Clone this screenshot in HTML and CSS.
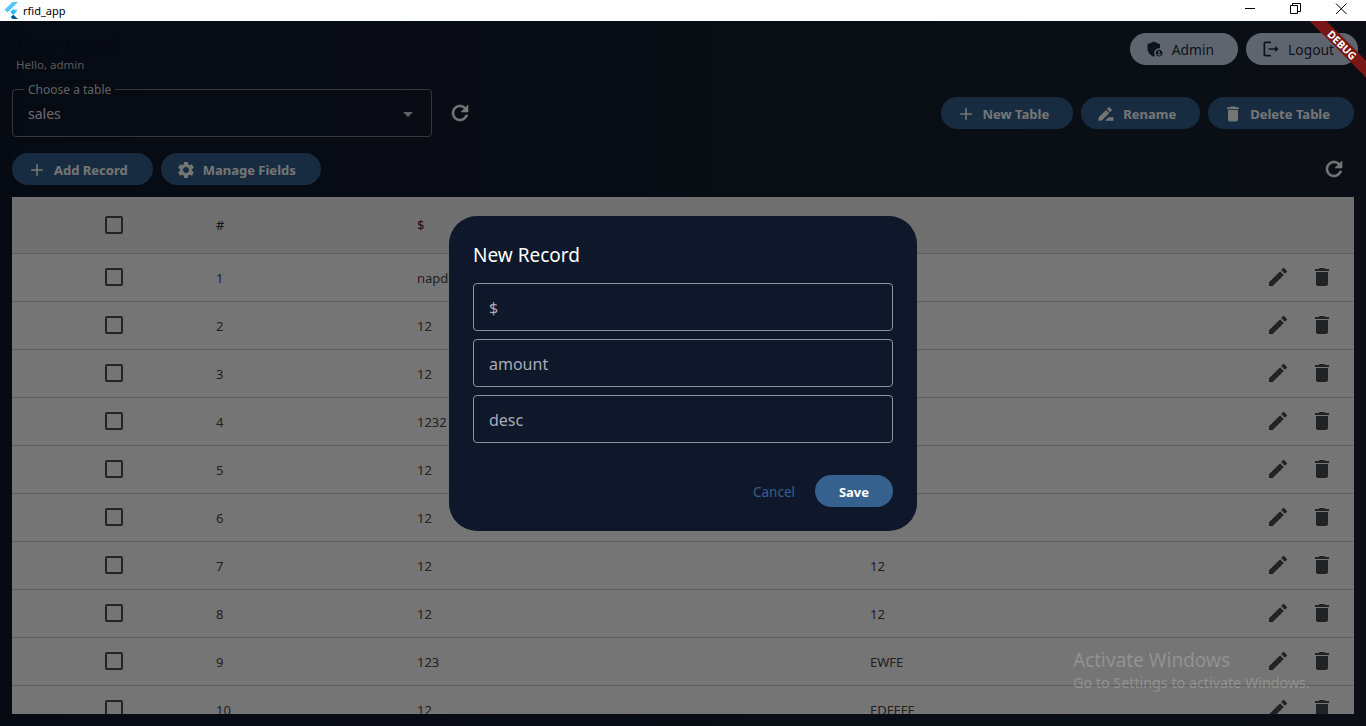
FILE: index.html
```html
<!DOCTYPE html>
<html lang="en">
<head>
    <meta charset="UTF-8">
    <meta name="viewport" content="width=device-width, initial-scale=1.0">
    <title>rfid_app</title>
    <link rel="stylesheet" href="styles.css">
</head>
<body>
    <div class="titlebar">
        <svg class="app-logo" width="16" height="17" viewBox="0 0 16 17">
            <polygon points="9.5,0 15,0 4.5,10.5 1.6,7.8" fill="#54c5f8"/>
            <polygon points="9.6,7.8 15,7.8 10.3,12.7 7.6,10" fill="#54c5f8"/>
            <polygon points="7.6,10 10.3,7.3 12.9,10 10.3,12.7" fill="#29b6f6"/>
            <polygon points="7.6,15 10.3,12.7 15,17 9.7,17" fill="#01579b"/>
        </svg>
        <span class="app-name">rfid_app</span>
        <div class="window-controls">
            <svg width="12" height="12" viewBox="0 0 12 12"><path d="M0 5.5h10" stroke="#000" fill="none"/></svg>
            <svg width="12" height="12" viewBox="0 0 12 12"><path d="M.5 2.5h7v8h-7zM2.5 2.5v-2h8v8h-3" stroke="#000" fill="none"/></svg>
            <svg width="12" height="12" viewBox="0 0 12 12"><path d="M1 .5l10.5 10.5M11.5 .5L1 11" stroke="#000" fill="none"/></svg>
        </div>
    </div>

    <div class="app">
        <div class="top-row">
            <div class="greeting">
                <div class="page-title">Dashboard</div>
                <div class="hello">Hello, admin</div>
            </div>
            <div class="user-actions">
                <button class="pill light">
                    <svg class="icon-sm" viewBox="0 0 24 24"><path d="M17 11c.34 0 .67.04 1 .09V6.27L10.5 3 3 6.27v4.91c0 4.54 3.2 8.79 7.5 9.82.55-.13 1.08-.32 1.6-.55-.69-.98-1.1-2.17-1.1-3.45 0-3.31 2.69-6 6-6z"/><path d="M17 13c-2.21 0-4 1.79-4 4s1.79 4 4 4 4-1.79 4-4-1.79-4-4-4zm0 1.38c.62 0 1.12.51 1.12 1.12s-.51 1.12-1.12 1.12-1.12-.51-1.12-1.12.5-1.12 1.12-1.12zm0 5.37c-.93 0-1.74-.46-2.24-1.17.05-.72 1.51-1.08 2.24-1.08s2.19.36 2.24 1.08c-.5.71-1.31 1.17-2.24 1.17z"/></svg>
                    Admin
                </button>
                <button class="pill light">
                    <svg class="icon-sm" viewBox="0 0 24 24"><path d="M5 5h7V3H5c-1.1 0-2 .9-2 2v14c0 1.1.9 2 2 2h7v-2H5V5zm16 7-4-4v3H9v2h8v3l4-4z"/></svg>
                    Logout
                </button>
            </div>
        </div>

        <div class="table-row">
            <div class="select-box">
                <span class="select-label">Choose a table</span>
                <span class="select-value">sales</span>
                <span class="select-arrow"></span>
            </div>
            <svg class="icon refresh" viewBox="0 0 24 24"><path d="M17.65 6.35C16.2 4.9 14.21 4 12 4c-4.42 0-7.99 3.58-7.99 8s3.57 8 7.99 8c3.73 0 6.84-2.55 7.73-6h-2.08c-.82 2.33-3.04 4-5.65 4-3.31 0-6-2.69-6-6s2.69-6 6-6c1.66 0 3.14.69 4.22 1.78L13 11h7V4l-2.35 2.35z"/></svg>
            <div class="table-actions">
                <button class="pill blue">
                    <svg class="icon-sm" viewBox="0 0 24 24"><path d="M19 13h-6v6h-2v-6H5v-2h6V5h2v6h6v2z"/></svg>
                    New Table
                </button>
                <button class="pill blue">
                    <svg class="icon-sm" viewBox="0 0 24 24"><path d="M15 16l-4 4h10v-4zM12.06 7.19 3 16.25V20h3.75l9.06-9.06zM18.71 8.04c.39-.39.39-1.02 0-1.41l-2.34-2.34a.9959.9959 0 0 0-1.41 0l-1.83 1.83 3.75 3.75 1.83-1.83z"/></svg>
                    Rename
                </button>
                <button class="pill blue">
                    <svg class="icon-sm" viewBox="0 0 24 24"><path d="M6 19c0 1.1.9 2 2 2h8c1.1 0 2-.9 2-2V7H6v12zM19 4h-3.5l-1-1h-5l-1 1H5v2h14V4z"/></svg>
                    Delete Table
                </button>
            </div>
        </div>

        <div class="record-row">
            <button class="pill blue">
                <svg class="icon-sm" viewBox="0 0 24 24"><path d="M19 13h-6v6h-2v-6H5v-2h6V5h2v6h6v2z"/></svg>
                Add Record
            </button>
            <button class="pill blue">
                <svg class="icon-sm" viewBox="0 0 24 24"><path d="M19.14 12.94c.04-.3.06-.61.06-.94 0-.32-.02-.64-.07-.94l2.03-1.58c.18-.14.23-.41.12-.61l-1.92-3.32c-.12-.22-.37-.29-.59-.22l-2.39.96c-.5-.38-1.03-.7-1.62-.94l-.36-2.54c-.04-.24-.24-.41-.48-.41h-3.84c-.24 0-.43.17-.47.41l-.36 2.54c-.59.24-1.13.57-1.62.94l-2.39-.96c-.22-.08-.47 0-.59.22L2.74 8.87c-.12.21-.08.47.12.61l2.03 1.58c-.05.3-.09.63-.09.94s.02.64.07.94l-2.03 1.58c-.18.14-.23.41-.12.61l1.92 3.32c.12.22.37.29.59.22l2.39-.96c.5.38 1.03.7 1.62.94l.36 2.54c.05.24.24.41.48.41h3.84c.24 0 .44-.17.47-.41l.36-2.54c.59-.24 1.13-.56 1.62-.94l2.39.96c.22.08.47 0 .59-.22l1.92-3.32c.12-.22.07-.47-.12-.61l-2.01-1.58zM12 15.6c-1.98 0-3.6-1.62-3.6-3.6s1.62-3.6 3.6-3.6 3.6 1.62 3.6 3.6-1.62 3.6-3.6 3.6z"/></svg>
                Manage Fields
            </button>
            <svg class="icon refresh right" viewBox="0 0 24 24"><path d="M17.65 6.35C16.2 4.9 14.21 4 12 4c-4.42 0-7.99 3.58-7.99 8s3.57 8 7.99 8c3.73 0 6.84-2.55 7.73-6h-2.08c-.82 2.33-3.04 4-5.65 4-3.31 0-6-2.69-6-6s2.69-6 6-6c1.66 0 3.14.69 4.22 1.78L13 11h7V4l-2.35 2.35z"/></svg>
        </div>

        <div class="data-table" id="records">
            <div class="data-row head">
                <span class="cell-check"><span class="checkbox"></span></span>
                <span class="cell-num">#</span>
                <span class="cell-a">$</span>
                <span class="cell-b">desc</span>
                <span class="cell-actions"></span>
            </div>
        </div>

        <div class="scrim"></div>

        <div class="dialog">
            <div class="dialog-title">New Record</div>
            <div class="dialog-fields">
                <div class="field">$</div>
                <div class="field">amount</div>
                <div class="field">desc</div>
            </div>
            <div class="dialog-actions">
                <span class="cancel">Cancel</span>
                <button class="save">Save</button>
            </div>
        </div>

        <div class="debug-banner"><span>DEBUG</span></div>

        <div class="activate">
            <div class="activate-big">Activate Windows</div>
            <div class="activate-small">Go to Settings to activate Windows.</div>
        </div>
    </div>

    <script>
        // rows of the table behind the dialog
        const rows = [
            ['napdol', '12'], ['12', '12'], ['12', '12'], ['1232', '12'], ['12', '12'],
            ['12', '12'], ['12', '12'], ['12', '12'], ['123', 'EWFE'], ['12', 'EDFEFE']
        ];
        const editIcon = '<svg class="icon" viewBox="0 0 24 24"><path d="M3 17.25V21h3.75L17.81 9.94l-3.75-3.75L3 17.25zM20.71 7.04c.39-.39.39-1.02 0-1.41l-2.34-2.34c-.39-.39-1.02-.39-1.41 0l-1.83 1.83 3.75 3.75 1.83-1.83z"/></svg>';
        const deleteIcon = '<svg class="icon" viewBox="0 0 24 24"><path d="M6 19c0 1.1.9 2 2 2h8c1.1 0 2-.9 2-2V7H6v12zM19 4h-3.5l-1-1h-5l-1 1H5v2h14V4z"/></svg>';
        const table = document.getElementById('records');
        rows.forEach((row, i) => {
            const el = document.createElement('div');
            el.className = 'data-row';
            el.innerHTML = '<span class="cell-check"><span class="checkbox"></span></span>' +
                '<span class="cell-num">' + (i + 1) + '</span>' +
                '<span class="cell-a">' + row[0] + '</span>' +
                '<span class="cell-b">' + row[1] + '</span>' +
                '<span class="cell-actions">' + editIcon + deleteIcon + '</span>';
            table.appendChild(el);
        });
    </script>
</body>
</html>
```

FILE: styles.css
```css
* {
    box-sizing: border-box;
}

html, body {
    margin: 0;
    height: 100%;
    overflow: hidden;
}

body {
    font-family: "Noto Sans", "Open Sans", sans-serif;
    display: flex;
    flex-direction: column;
}

/* Window title bar */
.titlebar {
    height: 21px;
    background: #fff;
    display: flex;
    align-items: center;
    padding-left: 3px;
    flex-shrink: 0;
}

.app-name {
    font-size: 11px;
    margin-left: 4px;
    color: #000;
}

.window-controls {
    margin-left: auto;
    display: flex;
    gap: 33px;
    padding-right: 19px;
    height: 16px;
}

/* App area */
.app {
    position: relative;
    flex: 1;
    overflow: hidden;
    padding: 12px;
    display: flex;
    flex-direction: column;
    background: linear-gradient(90deg, #0f172a, #18222f);
}

.top-row {
    display: flex;
    justify-content: space-between;
    height: 44px;
}

.greeting {
    padding-left: 4px;
}

.page-title {
    font-size: 20px;
    line-height: 24px;
    color: #0d1526;
}

.hello {
    font-size: 11.5px;
    line-height: 16px;
    color: #bcc0c6;
}

.user-actions {
    display: flex;
    gap: 8px;
    margin-right: -4px;
}

.pill {
    height: 32px;
    border: 0;
    border-radius: 16px;
    font-family: inherit;
    font-size: 13px;
    display: flex;
    align-items: center;
    gap: 7px;
    padding: 0 24px 0 15px;
}

.pill.light {
    background: #d0dcef;
    color: #1f2b3a;
    font-size: 13.8px;
    font-weight: 400;
}

.pill.blue {
    background: #36618e;
    color: #fff;
    font-weight: 700;
    padding-top: 1px;
}

.icon-sm {
    width: 20px;
    height: 20px;
    fill: currentColor;
    flex-shrink: 0;
}

.icon {
    width: 24px;
    height: 24px;
    fill: #474c52;
    flex-shrink: 0;
}

.icon.refresh {
    fill: #fff;
    stroke: #fff;
    stroke-width: 0.6;
}

.table-row {
    display: flex;
    align-items: center;
    margin-top: 12px;
    gap: 16px;
    height: 48px;
}

.select-box {
    position: relative;
    width: 420px;
    height: 48px;
    border: 1px solid #74787f;
    border-radius: 4px;
    display: flex;
    align-items: center;
    padding-left: 15px;
}

.select-label {
    position: absolute;
    left: 11px;
    top: -6px;
    padding: 0 4px;
    font-size: 12px;
    line-height: 12px;
    color: #d0d3d8;
    background: #101829;
}

.select-value {
    font-size: 14px;
    color: #e8eaee;
}

.select-arrow {
    position: absolute;
    right: 18px;
    top: 22px;
    border-left: 5px solid transparent;
    border-right: 5px solid transparent;
    border-top: 5px solid #d0d3d8;
}

.table-actions {
    margin-left: auto;
    display: flex;
    gap: 8px;
}

.record-row {
    display: flex;
    align-items: center;
    gap: 8px;
    margin-top: 16px;
    height: 32px;
}

.record-row .pill {
    padding-right: 25px;
}

.refresh.right {
    margin-left: auto;
    margin-right: 8px;
}

/* Table */
.data-table {
    margin-top: 12px;
    background: #fff;
    flex: 1;
    overflow: hidden;
    color: #45484d;
    font-size: 13px;
}

.data-row {
    height: 48px;
    display: flex;
    align-items: center;
    border-bottom: 1px solid #cfd0d2;
}

.data-row.head {
    height: 57px;
    background: #f3f4f7;
    color: #2b2e33;
}

.cell-check {
    width: 204px;
    padding-left: 93px;
    display: flex;
    margin-top: -1px;
}

.checkbox {
    width: 18px;
    height: 18px;
    border: 2px solid #4c4f55;
    border-radius: 2px;
}

.cell-num {
    width: 201px;
}

.cell-a {
    width: 453px;
}

.cell-b {
    flex: 1;
}

.cell-actions {
    display: flex;
    gap: 20px;
    padding-right: 20px;
    margin-top: -1px;
}

/* Dialog */
.scrim {
    position: absolute;
    inset: 0;
    background: rgba(0, 0, 0, 0.54);
}

.dialog {
    position: absolute;
    left: 449px;
    top: 195px;
    width: 468px;
    height: 315px;
    background: #0f172a;
    border-radius: 28px;
    padding: 24px;
    display: flex;
    flex-direction: column;
}

.dialog-title {
    font-size: 19px;
    line-height: 30px;
    color: #fff;
}

.dialog-fields {
    margin-top: 13px;
    display: flex;
    flex-direction: column;
    gap: 8px;
}

.field {
    height: 48px;
    border: 1px solid #8f949c;
    border-radius: 4px;
    padding: 2px 15px 0;
    display: flex;
    align-items: center;
    font-size: 16px;
    color: #a8acb3;
}

.dialog-actions {
    margin-top: 32px;
    display: flex;
    justify-content: flex-end;
    align-items: center;
    gap: 20px;
}

.cancel {
    font-size: 13.5px;
    padding-top: 2px;
    color: #36618e;
}

.save {
    width: 78px;
    height: 32px;
    border: 0;
    border-radius: 16px;
    padding-top: 2px;
    background: #36618e;
    color: #fff;
    font-family: inherit;
    font-size: 13px;
    font-weight: 700;
}

/* Overlays */
.debug-banner {
    position: absolute;
    top: 0;
    right: 0;
    width: 80px;
    height: 80px;
    overflow: hidden;
}

.debug-banner span {
    position: absolute;
    top: 18px;
    right: -24px;
    width: 96px;
    height: 12px;
    background: #7a1616;
    color: #fff;
    font-size: 10.5px;
    line-height: 12px;
    font-weight: 700;
    text-align: center;
    transform: rotate(45deg);
}

.activate {
    position: absolute;
    left: 1073px;
    top: 627px;
    color: rgba(255, 255, 255, 0.22);
}

.activate-big {
    font-size: 19px;
    line-height: 24px;
}

.activate-small {
    font-size: 14.3px;
    line-height: 21px;
}
```
